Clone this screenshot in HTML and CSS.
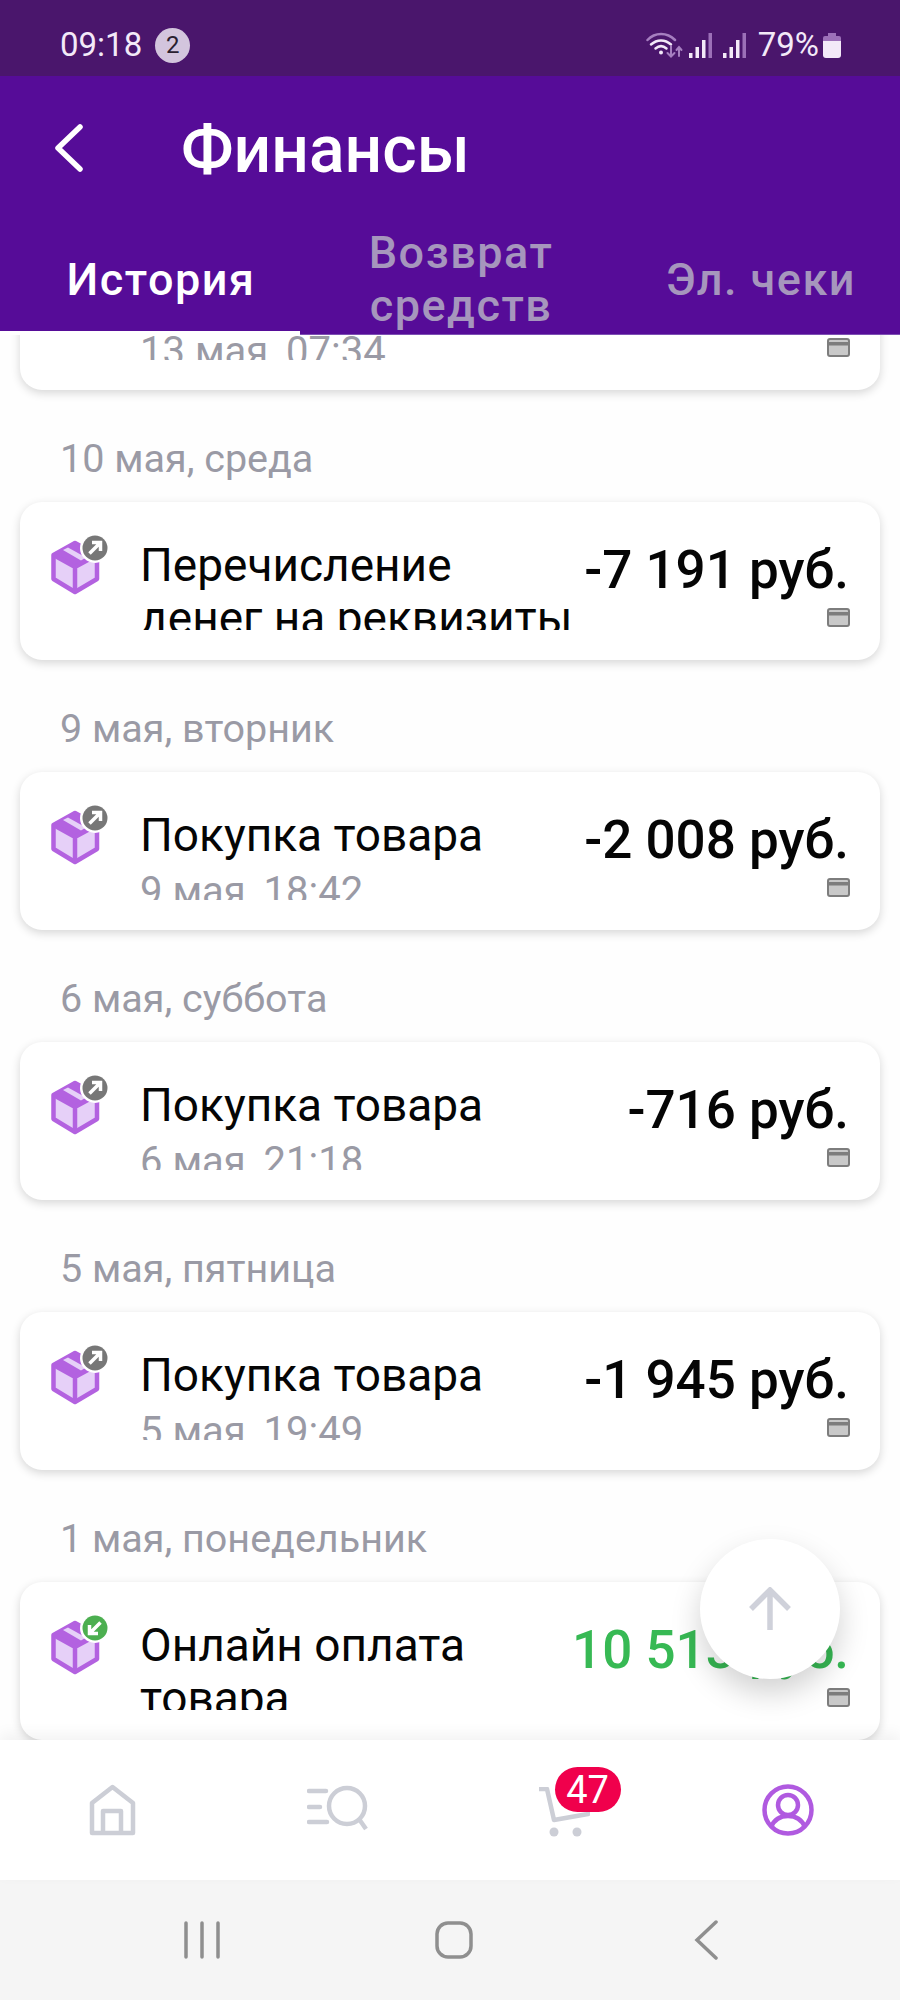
FILE: index.html
```html
<!DOCTYPE html>
<html lang="ru">
<head>
<meta charset="utf-8">
<title>Финансы</title>
<link rel="stylesheet" href="styles.css">
</head>
<body>
<svg class="sprites" aria-hidden="true">
  <symbol id="box" viewBox="0 0 60 60">
    <path d="M25 8 47 20V44L25 57 3.5 44V20Z" fill="#e6d0f8" stroke="#b362e0" stroke-width="4.500" stroke-linejoin="round"/>
    <path d="M25 8 47 20 25 32 3.5 20Z" fill="#b362e0"/>
    <path d="M13 15 18 12.500 36 22.500 31 25.500Z" fill="#e6d0f8"/>
    <path d="M3.500 20 25 32 47 20M25 32V57" fill="none" stroke="#b362e0" stroke-width="4.500"/>
  </symbol>
  <symbol id="cardico" viewBox="0 0 23 19">
    <rect x="1" y="1" width="21" height="17" rx="2" fill="#c9c9c9" stroke="#7d7d7d" stroke-width="2"/>
    <rect x="1" y="4" width="21" height="3.500" fill="#7d7d7d"/>
  </symbol>
</svg>
<div class="app">
  <div class="status">
    <div class="status-left">
      <span class="clock">09:18</span>
      <span class="notif">2</span>
    </div>
    <div class="status-right">
      <svg class="wifi" viewBox="0 0 37 26" fill="none" stroke-linecap="round">
        <path d="M1.500 8C9 0 21 0 29 8" stroke="#a67fc0" stroke-width="2.500"/>
        <path d="M5 12.500C11 7 19 7 25 12.500" stroke="#f3e9f8" stroke-width="2.500"/>
        <path d="M9.500 16.500C13 13.500 17 13.500 20.500 16.500" stroke="#f3e9f8" stroke-width="2.500"/>
        <circle cx="15" cy="20.500" r="2" fill="#f3e9f8"/>
        <path d="M25 14V24M21.500 21 25 24.500 28.500 21" stroke="#a67fc0" stroke-width="2"/>
        <path d="M33 24V15M30.500 18 33 15 35.500 18" stroke="#a67fc0" stroke-width="2"/>
      </svg>
      <svg class="signal" viewBox="0 0 23 25">
        <rect x="0" y="20" width="3.500" height="5" fill="#f3e9f8"/>
        <rect x="6.500" y="14" width="3.500" height="11" fill="#f3e9f8"/>
        <rect x="13" y="7" width="3.500" height="18" fill="#f3e9f8"/>
        <rect x="19.500" y="0" width="3.500" height="25" fill="#9c70b8"/>
      </svg>
      <svg class="signal" viewBox="0 0 23 25">
        <rect x="0" y="20" width="3.500" height="5" fill="#f3e9f8"/>
        <rect x="6.500" y="14" width="3.500" height="11" fill="#f3e9f8"/>
        <rect x="13" y="7" width="3.500" height="18" fill="#f3e9f8"/>
        <rect x="19.500" y="0" width="3.500" height="25" fill="#9c70b8"/>
      </svg>
      <span class="batt-text">79%</span>
      <svg class="battery" viewBox="0 0 18 25">
        <path d="M5 0H13V3H16Q18 3 18 5V8H0V5Q0 3 2 3H5Z" fill="#9c70b8"/>
        <path d="M0 8H18V22Q18 25 15 25H3Q0 25 0 22Z" fill="#f3e9f8"/>
      </svg>
    </div>
  </div>

  <header class="topbar">
    <div class="title-row">
      <svg class="back" viewBox="0 0 30 48" fill="none"><path d="M26 3 4 24 26 45" stroke="#fff" stroke-width="5.500" stroke-linecap="round" stroke-linejoin="round"/></svg>
      <h1 class="title">Финансы</h1>
    </div>
    <nav class="tabs">
      <div class="tab tab-active">История</div>
      <div class="tab">Возврат средств</div>
      <div class="tab">Эл. чеки</div>
    </nav>
  </header>

  <main class="list">
    <div class="scroller">
      <article class="card">
        <svg class="box"><use href="#box"/></svg>
        <div class="text">
          <div class="name">Покупка товара</div>
          <div class="when">13 мая, 07:34</div>
        </div>
        <div class="money">
          <div class="amount"></div>
          <svg class="cardico"><use href="#cardico"/></svg>
        </div>
      </article>

      <div class="date">10 мая, среда</div>
      <article class="card">
        <span class="box-wrap"><svg class="box"><use href="#box"/></svg><svg class="flag" viewBox="0 0 30 30"><circle cx="15" cy="15" r="15" fill="#fff"/><circle cx="15" cy="15" r="12.500" fill="#777"/><path d="M9.500 20.500 20 10M12 9.500H20.500V18" fill="none" stroke="#fff" stroke-width="3.500"/></svg></span>
        <div class="text">
          <div class="name">Перечисление денег на реквизиты</div>
        </div>
        <div class="money">
          <div class="amount">-7 191 руб.</div>
          <svg class="cardico"><use href="#cardico"/></svg>
        </div>
      </article>

      <div class="date">9 мая, вторник</div>
      <article class="card">
        <span class="box-wrap"><svg class="box"><use href="#box"/></svg><svg class="flag" viewBox="0 0 30 30"><circle cx="15" cy="15" r="15" fill="#fff"/><circle cx="15" cy="15" r="12.500" fill="#777"/><path d="M9.500 20.500 20 10M12 9.500H20.500V18" fill="none" stroke="#fff" stroke-width="3.500"/></svg></span>
        <div class="text">
          <div class="name">Покупка товара</div>
          <div class="when">9 мая, 18:42</div>
        </div>
        <div class="money">
          <div class="amount">-2 008 руб.</div>
          <svg class="cardico"><use href="#cardico"/></svg>
        </div>
      </article>

      <div class="date">6 мая, суббота</div>
      <article class="card">
        <span class="box-wrap"><svg class="box"><use href="#box"/></svg><svg class="flag" viewBox="0 0 30 30"><circle cx="15" cy="15" r="15" fill="#fff"/><circle cx="15" cy="15" r="12.500" fill="#777"/><path d="M9.500 20.500 20 10M12 9.500H20.500V18" fill="none" stroke="#fff" stroke-width="3.500"/></svg></span>
        <div class="text">
          <div class="name">Покупка товара</div>
          <div class="when">6 мая, 21:18</div>
        </div>
        <div class="money">
          <div class="amount">-716 руб.</div>
          <svg class="cardico"><use href="#cardico"/></svg>
        </div>
      </article>

      <div class="date">5 мая, пятница</div>
      <article class="card">
        <span class="box-wrap"><svg class="box"><use href="#box"/></svg><svg class="flag" viewBox="0 0 30 30"><circle cx="15" cy="15" r="15" fill="#fff"/><circle cx="15" cy="15" r="12.500" fill="#777"/><path d="M9.500 20.500 20 10M12 9.500H20.500V18" fill="none" stroke="#fff" stroke-width="3.500"/></svg></span>
        <div class="text">
          <div class="name">Покупка товара</div>
          <div class="when">5 мая, 19:49</div>
        </div>
        <div class="money">
          <div class="amount">-1 945 руб.</div>
          <svg class="cardico"><use href="#cardico"/></svg>
        </div>
      </article>

      <div class="date">1 мая, понедельник</div>
      <article class="card">
        <span class="box-wrap"><svg class="box"><use href="#box"/></svg><svg class="flag" viewBox="0 0 30 30"><circle cx="15" cy="15" r="15" fill="#fff"/><circle cx="15" cy="15" r="12.500" fill="#4caf50"/><path d="M20.500 9.500 10 20M18 20.500H9.500V12" fill="none" stroke="#fff" stroke-width="3.500"/></svg></span>
        <div class="text">
          <div class="name">Онлайн оплата товара</div>
        </div>
        <div class="money">
          <div class="amount amount-in">10 513 руб.</div>
          <svg class="cardico"><use href="#cardico"/></svg>
        </div>
      </article>
    </div>
    <button class="fab" aria-label="Наверх">
      <svg viewBox="0 0 44 44" fill="none"><path d="M22 43V4M3 22 22 3 41 22" stroke="#cfd1da" stroke-width="5.500"/></svg>
    </button>
  </main>

  <nav class="bottom">
    <div class="bottom-item">
      <svg class="nav-home" viewBox="0 0 49 52" fill="none" stroke="#ccced6" stroke-width="4.500" stroke-linejoin="round"><path d="M24.500 3 45 19V49H4V19Z"/><path d="M15 49V27H33V49"/></svg>
    </div>
    <div class="bottom-item">
      <svg class="nav-search" viewBox="0 0 62 48" fill="none" stroke="#ccced6" stroke-width="4.500" stroke-linecap="round"><path d="M2 6H19M2 22H13M2 37H20"/><circle cx="40" cy="21" r="18"/><path d="M52 34 59 44" stroke-linecap="butt"/></svg>
    </div>
    <div class="bottom-item">
      <span class="cart">
        <svg class="nav-cart" viewBox="0 0 52 52" fill="none"><path d="M1 2H9L16 33 50 27V14" stroke="#ccced6" stroke-width="4.500" stroke-linejoin="round"/><circle cx="16" cy="45" r="4.500" fill="#ccced6"/><circle cx="39" cy="45" r="4.500" fill="#ccced6"/></svg>
        <span class="cart-badge">47</span>
      </span>
    </div>
    <div class="bottom-item">
      <svg class="nav-user" viewBox="0 0 52 52" fill="none" stroke="#b05ae0" stroke-width="4.500"><circle cx="26" cy="26" r="23.500"/><circle cx="26" cy="21" r="10"/><path d="M9 43C13 34 20 32 26 32S39 34 43 43"/></svg>
    </div>
  </nav>

  <footer class="sysnav">
    <div class="sys-item">
      <svg class="sys-bars" viewBox="0 0 36 38"><path d="M2 2V36M18 2V36M34 2V36" stroke="#8f8f8f" stroke-width="3.500" stroke-linecap="round"/></svg>
    </div>
    <div class="sys-item">
      <svg class="sys-home" viewBox="0 0 38 38"><rect x="2" y="2" width="34" height="34" rx="11" fill="none" stroke="#8f8f8f" stroke-width="3.500"/></svg>
    </div>
    <div class="sys-item">
      <svg class="sys-back" viewBox="0 0 24 40"><path d="M22 2 3 20 22 38" fill="none" stroke="#8f8f8f" stroke-width="3.500" stroke-linecap="round"/></svg>
    </div>
  </footer>
</div>
</body>
</html>
```

FILE: styles.css
```css
* { box-sizing: border-box; }
html, body { margin: 0; padding: 0; }
body { font-family: Roboto, "Liberation Sans", sans-serif; background: #fff; }
.sprites { display: none; }

.app { width: 900px; height: 2000px; display: flex; flex-direction: column; overflow: hidden; }

/* status bar */
.status { flex: none; height: 76px; background: #4a166c; color: #f3e9f8; display: flex; align-items: center; justify-content: space-between; padding: 14px 59px 0 60px; }
.status-left { display: flex; align-items: center; gap: 13px; }
.clock { font-size: 33px; line-height: 36px; }
.notif { width: 35px; height: 35px; border-radius: 50%; background: #d3c5dd; color: #2a2030; font-size: 24px; display: flex; align-items: center; justify-content: center; }
.status-right { display: flex; align-items: center; }
.wifi { width: 37px; height: 26px; margin-right: 6px; }
.signal { width: 23px; height: 25px; margin-right: 11px; }
.signal + .signal { margin-right: 12px; }
.batt-text { font-size: 33px; line-height: 36px; margin-right: 4px; }
.battery { width: 18px; height: 25px; }

/* header */
.topbar { flex: none; height: 259px; background: #560c98; display: flex; flex-direction: column; }
.title-row { height: 122px; display: flex; align-items: flex-start; padding-left: 54px; }
.back { width: 30px; height: 48px; margin-top: 48px; }
.title { margin: 38px 0 0 97px; font-size: 66px; line-height: 72px; font-weight: 500; color: #fff; }
.tabs { flex: 1; display: flex; position: relative; border-bottom: 1px solid #7d4fb3; }
.tab { width: 300px; padding: 26px 0 0 22px; display: flex; align-items: center; justify-content: center; text-align: center; color: #a696bd; font-size: 45px; line-height: 53px; font-weight: 500; letter-spacing: 1.500px; }
.tab-active { color: #fff; position: relative; }
.tab-active::after { content: ""; position: absolute; left: 0; right: 0; bottom: -1px; height: 4px; background: #fff; }

/* list */
.list { flex: none; height: 1405px; background: #fefefe; position: relative; overflow: hidden; }
.scroller { margin-top: -103px; padding: 0 20px; }
.date { height: 112px; padding: 48px 0 0 40px; font-size: 39.500px; line-height: 42px; color: #9a9aa5; }
.card { height: 158px; display: flex; align-items: flex-start; background: #fff; border-radius: 22px; box-shadow: 0 3px 10px rgba(0, 0, 0, .16); padding-left: 30px; padding-right: 30px; }
.box-wrap, .box { flex: none; display: block; width: 60px; height: 60px; position: relative; margin-top: 33px; }
.box-wrap .box { margin: 0; }
.flag { position: absolute; left: 30px; top: -2px; width: 30px; height: 30px; }
.text { flex: 1; min-width: 0; margin-left: 30px; margin-top: 37px; height: 91px; overflow: hidden; }
.name { font-size: 46px; line-height: 53px; color: #050505; }
.when { font-size: 40px; line-height: 42px; color: #9a9aa5; margin-top: 9px; }
.money { flex: none; display: flex; flex-direction: column; align-items: flex-end; padding-top: 36px; position: relative; }
.amount { font-size: 53px; line-height: 64px; height: 64px; font-weight: 500; color: #050505; white-space: nowrap; margin-right: 1px; }
.amount-in { color: #37b954; }
.cardico { display: block; width: 23px; height: 19px; margin-top: 6px; }
.fab { position: absolute; left: 700px; top: 1204px; width: 140px; height: 140px; border-radius: 50%; border: 0; padding: 0; background: #fff; box-shadow: 0 14px 30px rgba(0, 0, 0, .18); display: flex; align-items: center; justify-content: center; }
.fab svg { width: 44px; height: 44px; }

/* bottom nav */
.bottom { flex: none; height: 140px; background: #fff; display: flex; position: relative; box-shadow: 0 -6px 14px rgba(0, 0, 0, .05); }
.bottom-item { width: 225px; display: flex; align-items: center; justify-content: center; }
.nav-home { width: 49px; height: 52px; }
.nav-search { width: 62px; height: 48px; margin-top: -2px; }
.cart { display: block; position: relative; width: 52px; height: 52px; margin-left: 2px; margin-top: 6px; }
.nav-cart { display: block; width: 52px; height: 52px; }
.cart-badge { position: absolute; left: 17px; top: -20px; width: 66px; height: 45px; border-radius: 23px; background: #f0004c; color: #fff; font-size: 38px; line-height: 47px; text-align: center; }
.nav-user { width: 52px; height: 52px; }

/* system nav */
.sysnav { flex: 1; background: #f5f5f5; display: flex; justify-content: center; padding-left: 8px; }
.sys-item { width: 252px; display: flex; align-items: center; justify-content: center; }
.sys-bars { width: 36px; height: 38px; }
.sys-home { width: 38px; height: 38px; }
.sys-back { width: 24px; height: 40px; }
```
